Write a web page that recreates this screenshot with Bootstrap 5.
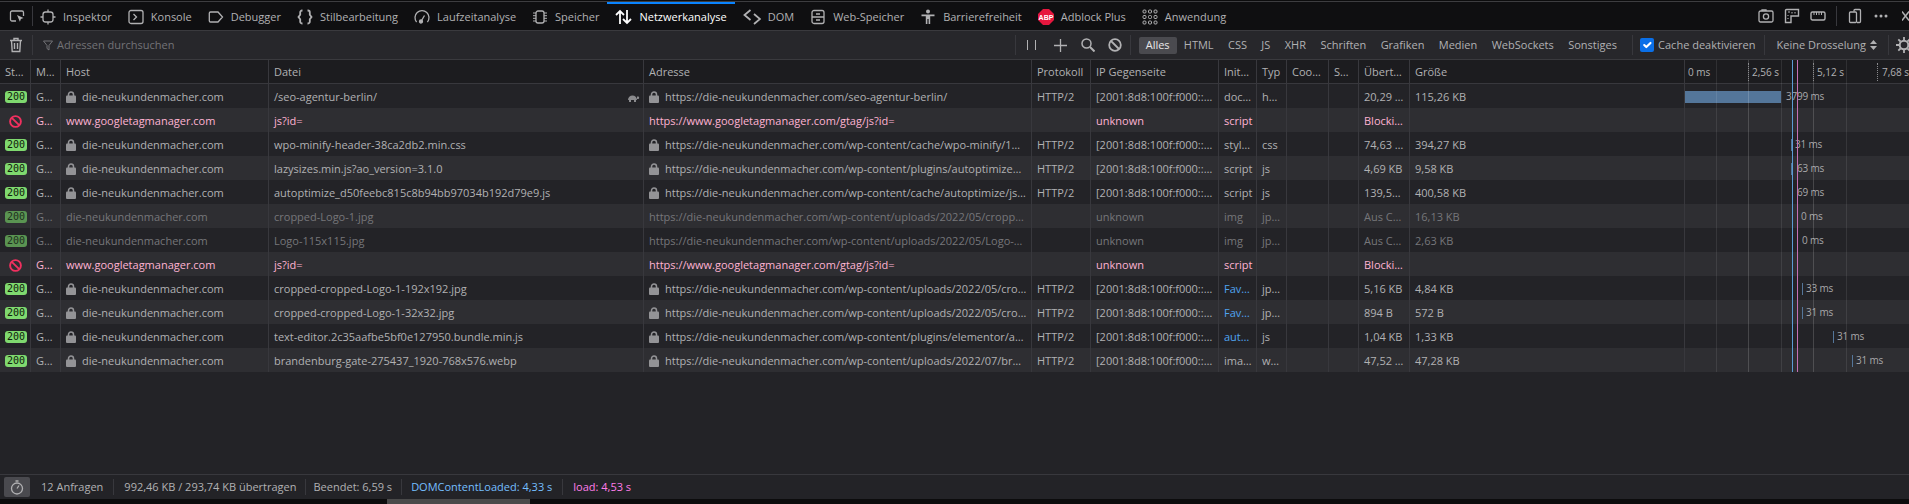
<!DOCTYPE html>
<html lang="de">
<head>
    <meta charset="UTF-8">
    <title>Netzwerkanalyse</title>
    <link href="https://cdn.jsdelivr.net/npm/bootstrap@5.3.0/dist/css/bootstrap.min.css" rel="stylesheet">
    <style>
        html, body { height: 100%; }
        body { background: #232327; color: #b1b1b3; font-family: "Open Sans", "Noto Sans", sans-serif; font-size: 11px; line-height: 16px; overflow: hidden; }
        svg { display: block; flex: none; }
        .top-line { height: 2px; background: #0c0c0d; border-bottom: 1px solid #3d3d40; flex: none; }
        .tab-bar { height: 29px; background: #0f0f11; border-bottom: 1px solid #3a3a3e; flex: none; }
        .tab-list { margin-left: -1px; }
        .tab-bar .nav-link { display: flex; align-items: center; gap: 7px; height: 28px; padding: 1px 8px 0; color: #b1b1b3; font-size: 11px; position: relative; }
        .tab-bar .nav-link.active { color: #fff; gap: 6px; }
        .tab-bar .nav-link.active::before { content: ""; position: absolute; left: 0; right: 0; top: 0; height: 2px; background: #0a84ff; }
        .v-sep { width: 1px; height: 20px; background: #38383d; flex: none; }
        .tool-icon { color: #b1b1b3; }
        .pick-box { margin-left: 9px; margin-right: 7px; }
        .tool-gap { margin-left: 10px; }
        .filter-bar { height: 29px; background: #27272b; border-bottom: 1px solid #3a3a3e; flex: none; }
        .filter-hint { color: #737377; font-size: 11px; }
        .type-btn { padding: 0 7.2px; height: 16px; line-height: 16px; border: 0; border-radius: 2px; font-size: 11px; color: #b1b1b3; --bs-btn-color: #b1b1b3; }
        .type-btn.on { background: #4a4a4f; color: #e8e8e8; height: 17px; padding: 0 7px; }
        .form-check-input.cache-box { width: 14px; height: 14px; margin: 0; border: 0; border-radius: 2px; background-color: #0a6fe8; }
        .net-wrap { flex: none; }
        .net-table { table-layout: fixed; width: 1909px; margin: 0; border-collapse: separate; border-spacing: 0; --bs-table-bg: transparent; --bs-table-color: #b1b1b3; color: #b1b1b3; }
        .net-table th, .net-table td { height: 24px; padding: 2px 0 0 5px; border: 0; border-right: 1px solid #38383d; font-weight: 400; white-space: nowrap; overflow: hidden; vertical-align: middle; box-shadow: none; background: transparent; color: inherit; }
        .net-table th { background: #1c1c1f; border-bottom: 1px solid #38383d; height: 24px; padding-top: 0; color: #b1b1b3; }
        .net-table th:last-child, .net-table td:last-child { border-right: 0; overflow: visible; }
        .net-table tr.odd { background: #232327; }
        .net-table tr.even { background: #2e2e32; }
        .net-table tr.cached { color: #76767a; }
        .net-table tr.blocked { color: #ffb3d2; }
        .net-table td.link-cell { color: #4fa3f0; }
        .net-table td.status-cell { overflow: visible; }
        .w-status { width: 31px; } .w-method { width: 30px; } .w-host { width: 208px; } .w-file { width: 375px; }
        .w-url { width: 388px; } .w-proto { width: 59px; } .w-ip { width: 128px; } .w-init { width: 38px; }
        .w-type { width: 30px; } .w-cookie { width: 42px; } .w-set { width: 30px; } .w-trans { width: 51px; }
        .w-size { width: 275px; } .w-fall { width: 224px; }
        .code-pill { display: block; width: 22px; height: 12px; border-radius: 3px; background: #7fd96f; color: #10200c; font: 400 10px/12px "DejaVu Sans Mono", "Liberation Mono", monospace; text-align: center; }
        tr.cached .code-pill { background: #5a9452; color: #20301d; }
        .cell-line { display: flex; align-items: center; gap: 6px; min-width: 0; }
        .lock-ico { color: #939396; }
        .slow-ico { margin-left: auto; margin-right: 3px; color: #8a8a8d; }
        .fall-canvas { position: absolute; top: 0; bottom: 0; left: 1684px; width: 225px; pointer-events: none; }
        .fall-line { position: absolute; top: 0; bottom: 0; width: 1px; background: rgba(255, 255, 255, .09); }
        .fall-line.major { background: rgba(255, 255, 255, .16); }
        .fall-line.dom { background: #5b9bd5; }
        .fall-line.load { background: #c46fb5; }
        .tick-mark { position: absolute; top: 3px; height: 18px; width: 0; border-left: 1px dotted #8a8a8d; }
        .tick-text { position: absolute; top: 4px; color: #b1b1b3; font-size: 10px; white-space: nowrap; }
        .bar-box { position: relative; height: 24px; }
        .time-bar { position: absolute; top: 7px; height: 12px; background: #54769a; }
        .row-time { position: absolute; top: 4px; color: #a8a8aa; font-size: 10px; letter-spacing: -.2px; white-space: nowrap; }
        .fill-space { flex: 1 1 auto; }
        .status-bar { height: 25px; border-top: 1px solid #38383d; background: #232327; flex: none; }
        .status-bar .v-sep { height: 16px; }
        .timer-btn { width: 26px; height: 20px; margin-left: 4px; margin-right: 11px; background: #4a4a4f; border-radius: 2px; }
        .dom-text { color: #75bfff; }
        .load-text { color: #ff7de9; }
        .h-scroll { height: 5px; background: #0c0c0d; flex: none; position: relative; }
        .h-thumb { width: 143px; height: 5px; margin-left: 387px; background: #4a4a4a; }
    </style>
</head>
<body class="d-flex flex-column">
    <div class="top-line"></div>

    <!-- Werkzeugleiste oben -->
    <div class="tab-bar d-flex align-items-center">
        <div class="tool-icon pick-box">
            <svg width="16" height="16" viewBox="0 0 16 16" fill="none" stroke="currentColor" stroke-width="1.3"><path d="M7 13H3a1.5 1.5 0 0 1-1.5-1.5v-7A1.5 1.5 0 0 1 3 3h10a1.5 1.5 0 0 1 1.5 1.5V8"/><path d="M8 7l6.5 3-2.6 1 -1 2.8z" fill="currentColor" stroke="none"/></svg>
        </div>
        <div class="v-sep"></div>
        <ul class="nav flex-nowrap tab-list" id="tabs"></ul>
        <div class="ms-auto d-flex align-items-center tool-icon">
            <svg width="16" height="16" viewBox="0 0 16 16" fill="none" stroke="currentColor" stroke-width="1.3"><rect x="1" y="3" width="14" height="11" rx="1.5"/><circle cx="8" cy="8.5" r="2.6"/><path d="M4 3V2h4v1"/></svg>
            <svg class="tool-gap" width="16" height="16" viewBox="0 0 16 16" fill="none" stroke="currentColor" stroke-width="1.4"><path d="M1.5 14.500v-12a1 1 0 0 1 1-1h12v6.500H7v6.500z"/><path d="M4 4h2M8 4v1.500M11 4v1.500M4 7v1M4 10v1" stroke-width="1.100"/></svg>
            <svg class="tool-gap" width="16" height="16" viewBox="0 0 16 16" fill="none" stroke="currentColor" stroke-width="1.400"><rect x="1" y="4" width="14" height="8" rx="1.500"/><path d="M4 4v3M6.500 4v3M9 4v3M11.500 4v3" stroke-width="1"/></svg>
            <div class="v-sep tool-gap"></div>
            <svg class="tool-gap" width="16" height="16" viewBox="0 0 16 16" fill="none" stroke="currentColor" stroke-width="1.300"><path d="M7 3.500V2.500a1 1 0 0 1 1-1h4.500a1 1 0 0 1 1 1v11a1 1 0 0 1-1 1H10"/><rect x="2.500" y="4" width="7" height="10.500" rx="1"/></svg>
            <svg class="tool-gap" width="16" height="16" viewBox="0 0 16 16" fill="currentColor"><circle cx="3" cy="8" r="1.500"/><circle cx="8" cy="8" r="1.500"/><circle cx="13" cy="8" r="1.500"/></svg>
            <svg style="margin-left:13px" width="7" height="16" viewBox="0 0 7 16" fill="none" stroke="currentColor" stroke-width="1.400"><path d="M0 3.500l7 9M7 3.500 0 12.500"/></svg>
        </div>
    </div>

    <!-- Filterleiste -->
    <div class="filter-bar d-flex align-items-center">
        <div class="tool-icon" style="margin-left:8px">
            <svg width="16" height="16" viewBox="0 0 16 16" fill="none" stroke="currentColor" stroke-width="1.400"><path d="M2 3.500h12M6 3V1.500h4V3M3.500 3.500l.7 11h7.600l.7-11M6.500 6v6M9.500 6v6"/></svg>
        </div>
        <div class="v-sep" style="margin-left:8px;margin-right:10px"></div>
        <svg width="10" height="11" viewBox="0 0 10 11" fill="none" stroke="#737377"><path d="M.5 1h9L6 5.500V10L4 8.500V5.500z"/></svg>
        <span class="filter-hint ms-1">Adressen durchsuchen</span>

        <div class="ms-auto d-flex align-items-center" id="rightTools">
            <div class="v-sep"></div>
            <svg style="margin-left:10px" width="11" height="12" viewBox="0 0 11 12" stroke="#b1b1b3"><path d="M1.500 1v10M9.500 1v10"/></svg>
            <svg style="margin-left:17px" width="13" height="13" viewBox="0 0 13 13" stroke="#b1b1b3" stroke-width="1.300"><path d="M6.500 0v13M0 6.500h13"/></svg>
            <svg style="margin-left:14px" width="14" height="14" viewBox="0 0 14 14" fill="none" stroke="#b1b1b3" stroke-width="1.500"><circle cx="5.500" cy="5.500" r="4.500"/><path d="M9 9l4.500 4.500" stroke-width="2"/></svg>
            <svg style="margin-left:13px" width="14" height="14" viewBox="0 0 14 14" fill="none" stroke="#b1b1b3" stroke-width="1.800"><circle cx="7" cy="7" r="5.800"/><path d="M3 3l8 8"/></svg>
            <div class="v-sep" style="margin-left:8px;margin-right:8px"></div>
            <div class="d-flex align-items-center" id="typeFilters"></div>
            <div class="v-sep" style="margin-left:8px;margin-right:7px"></div>
            <input class="form-check-input cache-box" type="checkbox" checked>
            <span class="ms-1">Cache deaktivieren</span>
            <div class="v-sep" style="margin-left:8px;margin-right:12px"></div>
            <span>Keine Drosselung</span>
            <svg class="ms-1" width="7" height="10" viewBox="0 0 7 10" fill="#b1b1b3"><path d="M3.500 0 7 4H0zM3.500 10 0 6h7z"/></svg>
            <div class="v-sep" style="margin-left:11px;margin-right:7px"></div>
            <svg width="13" height="16" viewBox="0 0 13 16" fill="none" stroke="#b1b1b3" stroke-width="2"><circle cx="8" cy="8" r="4.300"/><path d="M8 0v3M8 13v3M0 8h3M13 8h3M2.300 2.300l2.200 2.200M11.500 11.500l2.200 2.200M2.300 13.700l2.200-2.200M11.500 4.500l2.200-2.200" stroke-width="1.800"/></svg>
        </div>
    </div>

    <!-- Tabelle der Anfragen -->
    <div class="net-wrap position-relative">
        <table class="table net-table">
            <colgroup>
                <col class="w-status"><col class="w-method"><col class="w-host"><col class="w-file"><col class="w-url"><col class="w-proto"><col class="w-ip"><col class="w-init"><col class="w-type"><col class="w-cookie"><col class="w-set"><col class="w-trans"><col class="w-size"><col class="w-fall">
            </colgroup>
            <thead>
                <tr>
                    <th>St…</th><th>M…</th><th>Host</th><th>Datei</th><th>Adresse</th><th>Protokoll</th><th>IP Gegenseite</th><th>Init…</th><th>Typ</th><th>Coo…</th><th>S…</th><th>Übert…</th><th>Größe</th><th></th>
                </tr>
            </thead>
            <tbody id="netBody"></tbody>
        </table>
        <div class="fall-canvas" id="fallCanvas"></div>
    </div>

    <div class="fill-space"></div>

    <!-- Statusleiste -->
    <div class="status-bar d-flex align-items-center">
        <div class="timer-btn d-flex align-items-center justify-content-center">
            <svg width="14" height="15" viewBox="0 0 14 15" fill="none" stroke="#b1b1b3" stroke-width="1.300"><circle cx="7" cy="8.500" r="5.500"/><path d="M5.500 1h3M7 8.500l2-3"/></svg>
        </div>
        <span>12 Anfragen</span>
        <div class="v-sep" style="margin-left:10px;margin-right:10px"></div>
        <span>992,46 KB / 293,74 KB übertragen</span>
        <div class="v-sep" style="margin-left:8px;margin-right:8px"></div>
        <span>Beendet: 6,59 s</span>
        <div class="v-sep" style="margin-left:9px;margin-right:9px"></div>
        <span class="dom-text">DOMContentLoaded: 4,33 s</span>
        <div class="v-sep" style="margin-left:10px;margin-right:10px"></div>
        <span class="load-text">load: 4,53 s</span>
    </div>
    <div class="h-scroll"><div class="h-thumb"></div></div>

    <script src="https://cdn.jsdelivr.net/npm/bootstrap@5.3.0/dist/js/bootstrap.bundle.min.js"></script>
    <script>
        // Icons der Werkzeugleiste
        const ico = {
            inspector: '<rect x="3" y="3" width="10" height="10" rx="2.500"/><path d="M8 .5v2.500M8 13v2.500M.5 8H3M13 8h2.500"/>',
            console: '<rect x="1" y="1.500" width="14" height="13" rx="2"/><path d="M5.500 5l3 3-3 3"/>',
            debugger: '<path d="M2.500 3h7.500l4.500 5-4.500 5H2.500a1.200 1.200 0 0 1-1.200-1.200V4.200A1.200 1.200 0 0 1 2.500 3z"/>',
            style: '<path d="M5.500 1.500H5a1.800 1.800 0 0 0-1.800 1.800v2.500L1.500 8l1.700 2.200v2.500A1.800 1.800 0 0 0 5 14.500h.5M10.500 1.500h.5a1.800 1.800 0 0 1 1.800 1.800v2.500L14.500 8l-1.700 2.200v2.500a1.800 1.800 0 0 1-1.800 1.800h-.5" stroke-width="1.800"/>',
            perf: '<path d="M2.600 13A7 7 0 1 1 13.400 13"/><circle cx="7" cy="12.500" r="1.500" fill="currentColor"/><path d="M7 12.500l3.500-6" />',
            memory: '<rect x="4" y="2" width="8" height="12" rx="2"/><path d="M1 4h3M1 6.700h3M1 9.300h3M1 12h3M12 4h3M12 6.700h3M12 9.300h3M12 12h3" stroke-width="1"/>',
            network: '<path d="M5 15V2M1 6l4-4 4 4M12 1v13M8 10l4 4 4-4" stroke-width="1.800"/>',
            dom: '<path d="M7.500 1 1.500 6l6 5M11 5l6 5-6 5" stroke-width="1.800"/>',
            storage: '<rect x="2" y="1.500" width="12" height="13" rx="2"/><path d="M2 8h12M6 5h4M6 11h4"/>',
            access: '<circle cx="8" cy="2.500" r="2" fill="currentColor" stroke="none"/><path d="M1.500 5.500h13v1.800H10.200V15H8.600v-5H7.400v5H5.800V7.300H1.500z" fill="currentColor" stroke="none"/>',
            app: '<g stroke-width="1"><rect x="1" y="1" width="3" height="3" rx="1"/><rect x="6.500" y="1" width="3" height="3" rx="1"/><rect x="12" y="1" width="3" height="3" rx="1"/><rect x="1" y="6.500" width="3" height="3" rx="1"/><rect x="6.500" y="6.500" width="3" height="3" rx="1"/><rect x="12" y="6.500" width="3" height="3" rx="1"/><rect x="1" y="12" width="3" height="3" rx="1"/><rect x="6.500" y="12" width="3" height="3" rx="1"/><rect x="12" y="12" width="3" height="3" rx="1"/></g>'
        };
        const abp = '<svg width="16" height="16" viewBox="0 0 16 16"><path d="M5 0h6l5 5v6l-5 5H5l-5-5V5z" fill="#e6173e"/><text x="8" y="10.500" text-anchor="middle" fill="#fff" font-family="Liberation Sans" font-weight="700" font-size="7">ABP</text></svg>';

        const tabs = [
            ["Inspektor", "inspector"], ["Konsole", "console"], ["Debugger", "debugger"], ["Stilbearbeitung", "style"],
            ["Laufzeitanalyse", "perf"], ["Speicher", "memory"], ["Netzwerkanalyse", "network"], ["DOM", "dom"],
            ["Web-Speicher", "storage"], ["Barrierefreiheit", "access"], ["Adblock Plus", "abp"], ["Anwendung", "app"]
        ];
        document.getElementById("tabs").innerHTML = tabs.map(t => {
            const svg = t[1] === "abp" ? abp :
                `<svg width="${t[1] === "dom" || t[1] === "network" ? 18 : 16}" height="16" viewBox="0 0 ${t[1] === "dom" || t[1] === "network" ? 18 : 16} 16" fill="none" stroke="currentColor" stroke-width="1.300">${ico[t[1]]}</svg>`;
            return `<li class="nav-item"><a class="nav-link ${t[1] === "network" ? "active" : ""}" href="#">${svg}${t[0]}</a></li>`;
        }).join("");

        // Typ-Filter
        const typen = ["Alles", "HTML", "CSS", "JS", "XHR", "Schriften", "Grafiken", "Medien", "WebSockets", "Sonstiges"];
        document.getElementById("typeFilters").innerHTML = typen.map((t, i) =>
            `<button type="button" class="btn type-btn ${i === 0 ? "on" : ""}">${t}</button>`).join("");

        // Anfragen
        const host = "die-neukundenmacher.com";
        const base = "https://die-neukundenmacher.com/wp-content/";
        const ip = "[2001:8d8:100f:f000::…";
        const gtm = { kind: "blocked", host: "www.googletagmanager.com", file: "js?id=", url: "https://www.googletagmanager.com/gtag/js?id=", proto: "", ip: "unknown", init: "script", type: "", trans: "Blocki…", size: "" };
        const rows = [
            { status: "200", host, file: "/seo-agentur-berlin/", slow: true, url: "https://die-neukundenmacher.com/seo-agentur-berlin/", proto: "HTTP/2", ip, init: "doc…", type: "h…", trans: "20,29 …", size: "115,26 KB", bar: [0, 96], lbl: [101, "3799 ms"] },
            gtm,
            { status: "200", host, file: "wpo-minify-header-38ca2db2.min.css", url: base + "cache/wpo-minify/1…", proto: "HTTP/2", ip, init: "styl…", type: "css", trans: "74,63 …", size: "394,27 KB", bar: [106, 1], lbl: [110, "31 ms"] },
            { status: "200", host, file: "lazysizes.min.js?ao_version=3.1.0", url: base + "plugins/autoptimize…", proto: "HTTP/2", ip, init: "script", type: "js", trans: "4,69 KB", size: "9,58 KB", bar: [106, 2], lbl: [112, "63 ms"] },
            { status: "200", host, file: "autoptimize_d50feebc815c8b94bb97034b192d79e9.js", url: base + "cache/autoptimize/js…", proto: "HTTP/2", ip, init: "script", type: "js", trans: "139,5…", size: "400,58 KB", bar: [107, 1], lbl: [112, "69 ms"] },
            { kind: "cached", status: "200", host, nolock: true, file: "cropped-Logo-1.jpg", url: base + "uploads/2022/05/cropp…", proto: "", ip: "unknown", init: "img", type: "jp…", trans: "Aus C…", size: "16,13 KB", lbl: [116, "0 ms"] },
            { kind: "cached", status: "200", host, nolock: true, file: "Logo-115x115.jpg", url: base + "uploads/2022/05/Logo-…", proto: "", ip: "unknown", init: "img", type: "jp…", trans: "Aus C…", size: "2,63 KB", bar: [112, 1], lbl: [117, "0 ms"] },
            gtm,
            { status: "200", host, file: "cropped-cropped-Logo-1-192x192.jpg", url: base + "uploads/2022/05/cro…", proto: "HTTP/2", ip, init: "Fav…", initLink: true, type: "jp…", trans: "5,16 KB", size: "4,84 KB", bar: [117, 1], lbl: [121, "33 ms"] },
            { status: "200", host, file: "cropped-cropped-Logo-1-32x32.jpg", url: base + "uploads/2022/05/cro…", proto: "HTTP/2", ip, init: "Fav…", initLink: true, type: "jp…", trans: "894 B", size: "572 B", bar: [117, 1], lbl: [121, "31 ms"] },
            { status: "200", host, file: "text-editor.2c35aafbe5bf0e127950.bundle.min.js", url: base + "plugins/elementor/a…", proto: "HTTP/2", ip, init: "aut…", initLink: true, type: "js", trans: "1,04 KB", size: "1,33 KB", bar: [148, 1], lbl: [152, "31 ms"] },
            { status: "200", host, file: "brandenburg-gate-275437_1920-768x576.webp", url: base + "uploads/2022/07/br…", proto: "HTTP/2", ip, init: "ima…", type: "w…", trans: "47,52 …", size: "47,28 KB", bar: [167, 1], lbl: [171, "31 ms"] }
        ];

        const lock = '<svg class="lock-ico" width="10" height="12" viewBox="0 0 10 12" fill="currentColor"><path d="M2.500 5V3.500a2.500 2.500 0 0 1 5 0V5" fill="none" stroke="currentColor" stroke-width="1.500"/><rect y="4.500" width="10" height="7.500" rx="1"/></svg>';
        const turtle = '<svg class="slow-ico" width="13" height="9" viewBox="0 0 13 9" fill="currentColor"><path d="M1 7a4.500 4.500 0 0 1 9 0zM10 3.500h1.500a1.500 1.500 0 0 1 0 2.500H10zM2 7h2v2H2zM7 7h2v2H7z"/></svg>';
        const forbidden = '<svg class="ms-1" width="13" height="13" viewBox="0 0 13 13" fill="none" stroke="#f0305f" stroke-width="1.900"><circle cx="6.500" cy="6.500" r="5.400"/><path d="M2.800 2.800l7.400 7.400"/></svg>';

        function withLock(r, text) {
            if (r.kind === "blocked" || r.nolock) return `<div class="cell-line"><span>${text}</span></div>`;
            return `<div class="cell-line">${lock}<span>${text}</span></div>`;
        }

        document.getElementById("netBody").innerHTML = rows.map((r, i) => {
            const stat = r.kind === "blocked" ? forbidden : `<span class="code-pill">${r.status}</span>`;
            const bar = r.bar ? `<div class="time-bar" style="left:${r.bar[0]}px;width:${r.bar[1]}px"></div>` : "";
            const lbl = r.lbl ? `<div class="row-time" style="left:${r.lbl[0]}px">${r.lbl[1]}</div>` : "";
            return `<tr class="${i % 2 ? "even" : "odd"} ${r.kind || ""}">
                <td class="status-cell">${stat}</td>
                <td>G…</td>
                <td>${withLock(r, r.host)}</td>
                <td><div class="cell-line"><span>${r.file}</span>${r.slow ? turtle : ""}</div></td>
                <td>${withLock(r, r.url)}</td>
                <td>${r.proto}</td>
                <td>${r.ip}</td>
                <td class="${r.initLink ? "link-cell" : ""}">${r.init}</td>
                <td>${r.type}</td>
                <td></td><td></td>
                <td>${r.trans}</td>
                <td>${r.size}</td>
                <td class="p-0"><div class="bar-box">${bar}${lbl}</div></td>
            </tr>`;
        }).join("");

        // Raster und Markierungen der Zeitleiste
        const lines = [32, 64, 97, 129, 162].map(x => `<div class="fall-line ${x === 64 || x === 129 ? "major" : ""}" style="left:${x}px"></div>`).join("");
        const ticks = [[4, "0 ms"], [68, "2,56 s"], [133, "5,12 s"], [198, "7,68 s"]].map(t => `<div class="tick-text" style="left:${t[0]}px">${t[1]}</div>`).join("");
        const dots = [64, 129, 193].map(x => `<div class="tick-mark" style="left:${x}px"></div>`).join("");
        document.getElementById("fallCanvas").innerHTML = lines + ticks + dots +
            '<div class="fall-line dom" style="left:108px"></div><div class="fall-line load" style="left:113px"></div>';
    </script>
</body>
</html>
